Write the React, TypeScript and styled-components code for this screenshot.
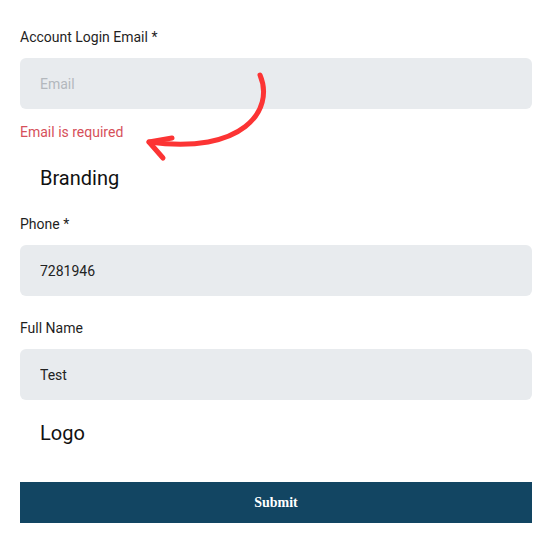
import styled, {createGlobalStyle} from 'styled-components';

const GlobalStyle = createGlobalStyle`
  body {
    margin: 0;
    background: #ffffff;
    font-family: Roboto, "Liberation Sans", sans-serif;
  }
`;

export default function App(): JSX.Element {
    return (
        <Page>
            <GlobalStyle/>
            <Form onSubmit={(e) => e.preventDefault()}>
                <Field>
                    <Label>Account Login Email *</Label>
                    <Input placeholder="Email" defaultValue=""/>
                    <ErrorText>Email is required</ErrorText>
                </Field>
                <Section $top={24}>Branding</Section>
                <Field>
                    <Label>Phone *</Label>
                    <Input defaultValue="7281946"/>
                </Field>
                <Field>
                    <Label>Full Name</Label>
                    <Input defaultValue="Test"/>
                </Field>
                <Section $top={21}>Logo</Section>
                <SubmitButton type="submit">Submit</SubmitButton>
            </Form>
            <Arrow width="140" height="100" viewBox="0 0 140 100">
                <path d="M117 5 C 132 40, 100 85, 6 72" fill="none" stroke="#fc3434" strokeWidth="5"
                      strokeLinecap="round"/>
                <path d="M29 68 L 6 72 L 20 88" fill="none" stroke="#fc3434" strokeWidth="5"
                      strokeLinecap="round" strokeLinejoin="round"/>
            </Arrow>
        </Page>
    );
}

const Page = styled.div`
  position: relative;
  width: 549px;
  height: 536px;
`;

const Form = styled.form`
  display: flex;
  flex-direction: column;
  padding: 27px 17px 0 20px;
`;

const Field = styled.div`
  display: flex;
  flex-direction: column;

  & + & {
    margin-top: 22px;
  }
`;

const Label = styled.label`
  font-size: 14px;
  line-height: 20px;
  color: #1f1f1f;
  margin-bottom: 11px;
`;

const Input = styled.input`
  box-sizing: border-box;
  height: 51px;
  border: none;
  border-radius: 6px;
  background: #e8ebee;
  padding: 0 20px;
  font-family: Roboto, "Liberation Sans", sans-serif;
  font-size: 14px;
  color: #222;
  outline: none;

  &::placeholder {
    color: #b3b8bd;
  }
`;

const ErrorText = styled.div`
  font-size: 14px;
  line-height: 20px;
  color: #d6505a;
  margin-top: 13px;
`;

const Section = styled.div<{ $top: number }>`
  font-size: 20px;
  line-height: 24px;
  color: #111;
  padding-left: 20px;
  margin: ${(p) => p.$top}px 0 24px;
`;

const SubmitButton = styled.button`
  height: 41px;
  margin-top: 13px;
  border: none;
  background: #124562;
  color: #fff;
  font-family: "Liberation Serif", serif;
  font-weight: bold;
  font-size: 14px;
`;

const Arrow = styled.svg`
  position: absolute;
  left: 143px;
  top: 70px;
`;
